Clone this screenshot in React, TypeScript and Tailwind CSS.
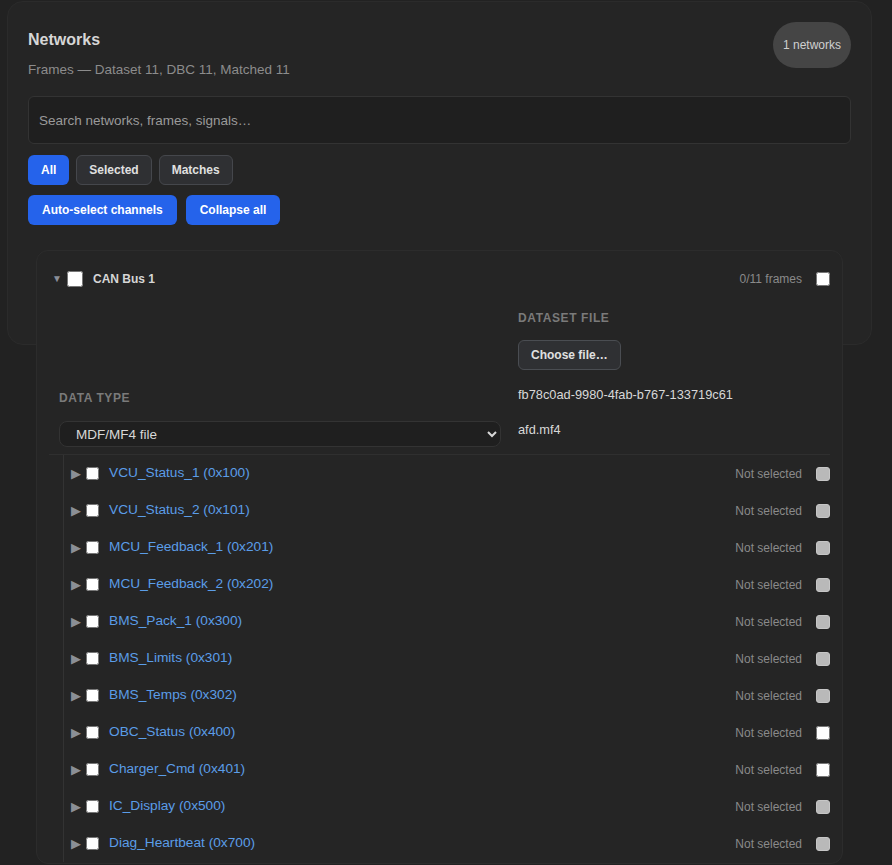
import React from 'react';

const frames: { name: string; enabled: boolean }[] = [
  { name: 'VCU_Status_1 (0x100)', enabled: false },
  { name: 'VCU_Status_2 (0x101)', enabled: false },
  { name: 'MCU_Feedback_1 (0x201)', enabled: false },
  { name: 'MCU_Feedback_2 (0x202)', enabled: false },
  { name: 'BMS_Pack_1 (0x300)', enabled: false },
  { name: 'BMS_Limits (0x301)', enabled: false },
  { name: 'BMS_Temps (0x302)', enabled: false },
  { name: 'OBC_Status (0x400)', enabled: true },
  { name: 'Charger_Cmd (0x401)', enabled: true },
  { name: 'IC_Display (0x500)', enabled: false },
  { name: 'Diag_Heartbeat (0x700)', enabled: false },
];

const FrameRow: React.FC<{ name: string; enabled: boolean }> = ({ name, enabled }) => (
  <div className="flex items-center h-[37px] pl-[7px]">
    <span className="w-[10px] text-[13px] leading-none text-[#8b8f96]">▶</span>
    <input type="checkbox" className="m-0 ml-[5px] w-[13px] h-[13px]" />
    <span className="ml-[10px] text-[13.7px] text-[#5b9de8]">{name}</span>
    <span className="ml-auto text-[12px] text-[#8a8a8a]">Not selected</span>
    {enabled ? (
      <input type="checkbox" className="m-0 ml-[14px] w-[14px] h-[14px]" />
    ) : (
      <input
        type="checkbox"
        disabled
        className="m-0 ml-[14px] w-[14px] h-[14px] appearance-none rounded-[3px] border border-[#c6c6c6] bg-[#b9b9b9]"
      />
    )}
  </div>
);

export default function App() {
  return (
    <div
      className="min-h-[865px] bg-[#222222] pl-[7px] pt-[1px]"
      style={{ fontFamily: '"Liberation Sans", Arial, sans-serif' }}
    >
      <div className="w-[865px] h-[344px] rounded-2xl border border-[#2b2b2b] bg-[#252525] p-[20px]">
        {/* header */}
        <div className="flex items-start justify-between">
          <div>
            <h1 className="mt-[6px] text-[16px] leading-6 font-bold text-[#d6d6d6]">Networks</h1>
            <p className="mt-[10px] text-[13.5px] leading-4 text-[#8c8c8c]">
              Frames — Dataset 11, DBC 11, Matched 11
            </p>
          </div>
          <span className="flex items-center h-[46px] px-[10px] rounded-full bg-[#454545] text-[12px] text-[#d0d0d0]">
            1 networks
          </span>
        </div>

        <input
          type="text"
          placeholder="Search networks, frames, signals…"
          className="mt-[18px] w-full h-[48px] rounded-md border border-[#333333] bg-[#1f1f1f] px-[10px] text-[13.5px] text-[#dddddd] placeholder:text-[#9a9a9a] outline-none"
        />

        <div className="mt-[11px] flex gap-[7px]">
          <button className="h-[30px] px-[13px] rounded-md bg-[#2563eb] text-[12px] font-bold text-white">All</button>
          <button className="h-[30px] px-3 rounded-md border border-[#45474c] bg-[#2f3033] text-[12px] font-bold text-[#e0e0e0]">
            Selected
          </button>
          <button className="h-[30px] px-3 rounded-md border border-[#45474c] bg-[#2f3033] text-[12px] font-bold text-[#e0e0e0]">
            Matches
          </button>
        </div>
        <div className="mt-[10px] flex gap-[9px]">
          <button className="h-[30px] px-[14px] rounded-md bg-[#2563eb] text-[12px] font-bold text-white">
            Auto-select channels
          </button>
          <button className="h-[30px] px-[14px] rounded-md bg-[#2563eb] text-[12px] font-bold text-white">
            Collapse all
          </button>
        </div>

        {/* network card */}
        <div className="mt-[25px] mx-[8px] rounded-xl border border-[#2c2c2c] bg-[#252525] px-[12px] pt-[12px] pb-[1px]">
          <div className="flex items-center h-[32px]">
            <span className="ml-[3px] w-[7px] text-[10px] leading-none text-[#8a8f99]">▼</span>
            <input type="checkbox" className="m-0 ml-[8px] w-4 h-4" />
            <span className="ml-[10px] text-[12px] font-bold text-[#d6d6d6]">CAN Bus 1</span>
            <span className="ml-auto text-[12px] text-[#8a8a8a]">0/11 frames</span>
            <input type="checkbox" className="m-0 ml-[14px] w-[14px] h-[14px]" />
          </div>

          <div className="mt-[5px] grid grid-cols-[442px_1fr] gap-x-[17px] px-[10px]">
            <div className="pt-[90px]">
              <div className="h-4 leading-4 text-[12px] font-bold tracking-wider uppercase text-[#7a7a7a]">Data type</div>
              <select className="mt-[15px] w-full h-[26px] rounded-lg border border-[#333333] bg-[#1f1f1f] pl-[12px] pr-2 text-[13.5px] text-[#d8d8d8] [color-scheme:dark]">
                <option>MDF/MF4 file</option>
              </select>
            </div>
            <div className="pt-[10px]">
              <div className="h-4 leading-4 text-[12px] font-bold tracking-wider uppercase text-[#7a7a7a]">Dataset file</div>
              <button className="mt-[14px] h-[30px] px-3 rounded-md border border-[#4a4d52] bg-[#2f3033] text-[12px] font-bold text-[#e0e0e0]">
                Choose file…
              </button>
              <div className="mt-[17px] h-4 leading-4 text-[12.8px] text-[#d8d8d8]">fb78c0ad-9980-4fab-b767-133719c61</div>
              <div className="mt-[19px] h-4 leading-4 text-[12.8px] text-[#d8d8d8]">afd.mf4</div>
            </div>
          </div>

          <div className="mt-[7px] border-t border-[#2f2f2f]" />

          <div className="ml-[14px] border-l border-[#333333]">
            {frames.map((f) => (
              <FrameRow key={f.name} name={f.name} enabled={f.enabled} />
            ))}
          </div>
        </div>
      </div>
    </div>
  );
}
